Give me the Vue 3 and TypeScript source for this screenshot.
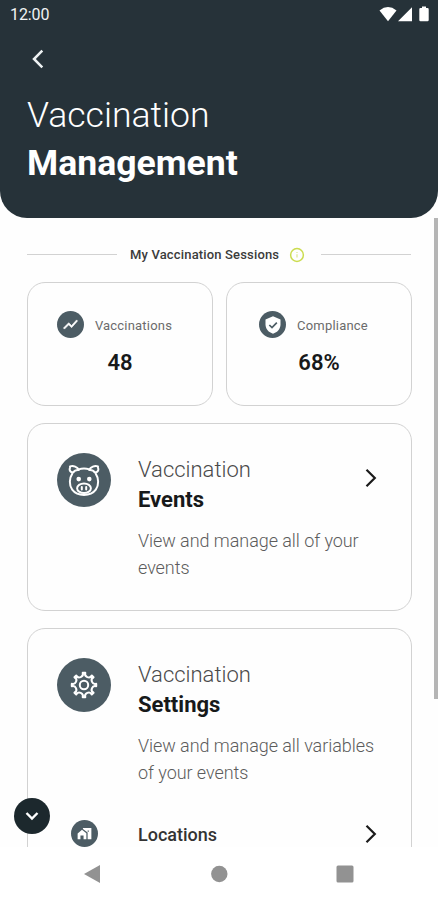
<script setup lang="ts">
interface Stat {
  id: 'trend' | 'shield'
  label: string
  value: string
}

const stats: Stat[] = [
  { id: 'trend', label: 'Vaccinations', value: '48' },
  { id: 'shield', label: 'Compliance', value: '68%' },
]

// Outline of an eight-toothed gear centred on the origin.
function gearOutline(radius: number, notch: number, halfTooth: number): string {
  const point = (deg: number): string => {
    const rad = (deg * Math.PI) / 180
    return `${(radius * Math.cos(rad)).toFixed(2)} ${(radius * Math.sin(rad)).toFixed(2)}`
  }
  let d = `M${point(-halfTooth)}`
  for (let k = 0; k < 8; k++) {
    const angle = k * 45
    d += `L${point(angle + halfTooth)}A${notch} ${notch} 0 0 0 ${point(angle + 45 - halfTooth)}`
  }
  return d + 'Z'
}

const gearPath = gearOutline(12.3, 3.5, 6)
</script>

<template>
  <div class="screen">
    <header class="header">
      <div class="status">
        <span class="time">12:00</span>
        <svg class="signals" width="52" height="18" viewBox="0 0 52 18">
          <path d="M0.5 4.4Q9 -2.4 17.5 4.4L9 15.2Z" />
          <path d="M19 15.2L33 1.2V15.2Z" />
          <path d="M40.3 3.2a1.2 1.2 0 0 1 1.2-1.2H43V.6h4V2h1.500a1.200 1.200 0 0 1 1.200 1.200V14a1.200 1.200 0 0 1-1.200 1.200h-7a1.200 1.200 0 0 1-1.200-1.200Z" />
        </svg>
      </div>
      <button class="back" aria-label="Back">
        <svg width="12" height="20" viewBox="0 0 12 20">
          <path d="M10.300 1.700L2 10l8.300 8.300" />
        </svg>
      </button>
      <h1 class="heading"><span class="thin">Vaccination</span><span class="strong">Management</span></h1>
    </header>

    <main class="content">
      <div class="divider">
        <span class="rule"></span>
        <span class="divider-text">My Vaccination Sessions</span>
        <svg class="info" width="16" height="16" viewBox="0 0 16 16">
          <circle cx="8" cy="8" r="6.400" />
          <path class="info-mark" d="M8 7.200v3.200M8 5v1" />
        </svg>
        <span class="rule"></span>
      </div>

      <div class="stats">
        <section v-for="stat in stats" :key="stat.id" class="stat">
          <div class="stat-row">
            <span class="badge small">
              <svg v-if="stat.id === 'trend'" width="17" height="17" viewBox="0 0 24 24">
                <path d="M3.500 18.490l6-6.010 4 4L22 6.920l-1.410-1.410-7.090 7.970-4-4L2 16.990z" class="fill bold" />
              </svg>
              <svg v-else width="20" height="20" viewBox="0 0 24 24">
                <path class="fill" d="M12 1.500L3 5.300v5.900c0 5.500 3.800 9.900 9 11.300 5.200-1.400 9-5.800 9-11.300V5.300z" />
                <path class="check" d="M7.600 12l3.200 3.200 5.800-6" />
              </svg>
            </span>
            <span class="stat-label">{{ stat.label }}</span>
          </div>
          <div class="stat-value">{{ stat.value }}</div>
        </section>
      </div>

      <section class="card events">
        <span class="badge large">
          <svg class="line-icon" width="34" height="34" viewBox="-17 -17 34 34">
            <path d="M-5.500 -10.600C-2 -11.900 2 -11.900 5.500 -10.600M-11.800 -6.200C-14.800 -2 -15 5.500 -11.800 9.700C-6.500 16.800 6.500 16.800 11.800 9.700C15 5.500 14.800 -2 11.800 -6.200" />
            <path d="M-5.200 -10C-6.600 -13.200 -10.500 -14.600 -14 -13.600C-13.300 -12.600 -14.700 -11.800 -14.300 -10.100C-13.900 -8.300 -12.500 -7.600 -11 -7.400C-9.500 -9.600 -7.800 -10.300 -5.200 -10ZM5.200 -10C6.600 -13.200 10.500 -14.600 14 -13.600C13.300 -12.600 14.700 -11.800 14.300 -10.100C13.900 -8.300 12.500 -7.600 11 -7.400C9.500 -9.600 7.800 -10.300 5.200 -10Z" />
            <ellipse cx="0" cy="8.200" rx="6.900" ry="4.800" />
            <path d="M-2.200 6.900v2.600M2.200 6.900v2.600" />
            <circle class="eye" cx="-5.300" cy="-0.900" r="2.300" />
            <circle class="eye" cx="5.300" cy="-0.900" r="2.300" />
          </svg>
        </span>
        <div class="card-text">
          <h2 class="card-title"><span class="thin">Vaccination</span><span class="strong">Events</span></h2>
          <p class="description">View and manage all of your events</p>
        </div>
        <svg class="chevron" width="12" height="20" viewBox="0 0 12 20">
          <path d="M1.500 1.700L9.800 10l-8.300 8.300" />
        </svg>
      </section>

      <section class="card settings">
        <span class="badge large">
          <svg class="line-icon" width="34" height="34" viewBox="-17 -17 34 34">
            <path :d="gearPath" />
            <circle r="4.200" />
          </svg>
        </span>
        <div class="card-text">
          <h2 class="card-title"><span class="thin">Vaccination</span><span class="strong">Settings</span></h2>
          <p class="description">View and manage all variables of your events</p>
        </div>
        <div class="link-row">
          <span class="link-icon">
            <span class="badge small">
              <svg width="15" height="15" viewBox="0 0 24 24">
                <path class="fill" d="M1 12v9h4.500v-6h5v6H15V11.500L8 6zM9.500 3v1.800l7.500 5.500V21h6V3zm9.500 6h-2V7h2z" />
              </svg>
            </span>
          </span>
          <span class="link-label">Locations</span>
          <svg class="chevron" width="12" height="20" viewBox="0 0 12 20">
            <path d="M1.500 1.700L9.800 10l-8.300 8.300" />
          </svg>
        </div>
      </section>

      <div class="scrollbar"></div>
      <button class="fab" aria-label="Scroll down">
        <svg width="14" height="10" viewBox="0 0 14 10">
          <path d="M1.500 2L7 7.500 12.500 2" />
        </svg>
      </button>
    </main>

    <nav class="navbar">
      <svg width="18" height="20" viewBox="0 0 18 20"><path d="M0 10L16 1v18z" /></svg>
      <svg width="18" height="20" viewBox="0 0 18 20"><circle cx="9.300" cy="10" r="8.200" /></svg>
      <svg width="18" height="20" viewBox="0 0 18 20"><rect x=".5" y="1.500" width="17" height="17" rx="1.500" /></svg>
    </nav>
  </div>
</template>

<style>
body {
  background: #fff;
}
</style>

<style scoped>
.screen {
  display: flex;
  flex-direction: column;
  width: 438px;
  height: 900px;
  overflow: hidden;
  background: #fefefe;
  color: #17191a;
  font-family: Roboto, 'Liberation Sans', sans-serif;
}

.header {
  flex: none;
  height: 218px;
  box-sizing: border-box;
  border-radius: 0 0 27px 27px;
  background: #263239;
  color: #fff;
}

.status {
  display: flex;
  justify-content: space-between;
  height: 29px;
  padding: 0 7px 0 10px;
}

.time {
  font-size: 16px;
  line-height: 30px;
  letter-spacing: -0.1px;
  color: #f1f3f4;
}

.signals {
  margin-top: 6px;
  fill: #fff;
}

.back {
  display: flex;
  margin: 20px 0 0 32px;
  padding: 0;
  border: 0;
  background: none;
}

.back path {
  fill: none;
  stroke: #eef2f3;
  stroke-width: 2.5;
}

.heading {
  display: flex;
  flex-direction: column;
  margin: 22px 0 0 27px;
  font-size: 35.6px;
  line-height: 48px;
}

.thin {
  font-weight: 300;
}

.strong {
  font-weight: 700;
}

.content {
  position: relative;
  flex: 1;
  min-height: 0;
  overflow: hidden;
  padding: 27px 27px 0;
}

.divider {
  display: flex;
  align-items: center;
  height: 19px;
}

.rule {
  width: 90px;
  height: 1px;
  background: #d2d2d2;
}

.divider-text {
  margin-left: 13px;
  font-size: 13px;
  font-weight: 500;
  letter-spacing: 0.16px;
  white-space: nowrap;
  color: #3b3b3b;
}

.info {
  margin: 0 16px 0 auto;
  fill: none;
  stroke: #cbdc4f;
  stroke-width: 1.5;
}

.info-mark {
  stroke-width: 1.1;
  opacity: 0.7;
}

.stats {
  display: grid;
  grid-template-columns: 186px 186px;
  gap: 13px;
  margin-top: 18px;
}

.stat {
  height: 124px;
  box-sizing: border-box;
  border: 1.5px solid #d2d2d2;
  border-radius: 18px;
  padding-top: 28px;
}

.stat-row {
  display: flex;
  align-items: center;
  justify-content: center;
  gap: 11px;
  padding-right: 11px;
}

.badge {
  display: flex;
  flex: none;
  align-items: center;
  justify-content: center;
  border-radius: 50%;
  background: #4c5c64;
}

.small {
  width: 27px;
  height: 27px;
}

.large {
  width: 54px;
  height: 54px;
}

.fill {
  fill: #fff;
}

.bold {
  stroke: #fff;
  stroke-width: 0.8;
}

.check {
  fill: none;
  stroke: #4c5c64;
  stroke-width: 2;
}

.stat-label {
  padding-top: 2px;
  font-size: 13px;
  letter-spacing: 0.2px;
  color: #6b6b6b;
}

.stat-value {
  margin-top: 10px;
  text-align: center;
  font-size: 22px;
  font-weight: 600;
  line-height: 30px;
}

.card {
  display: grid;
  grid-template-columns: 54px 1fr auto;
  column-gap: 27px;
  box-sizing: border-box;
  width: 385px;
  margin-top: 17px;
  border: 1.5px solid #d2d2d2;
  border-radius: 18px;
  padding: 29px 34px 0 29px;
  align-items: start;
  align-content: start;
}

.events {
  height: 188px;
}

.settings {
  height: 300px;
}

.card-text {
  grid-column: 2 / 4;
  grid-row: 1;
  padding-top: 2px;
}

.card-title {
  display: flex;
  flex-direction: column;
  margin: 0;
  font-size: 22px;
  line-height: 30px;
}

.card-title .thin {
  color: #4a4a4a;
}

.description {
  margin: 12px 0 0;
  font-size: 18px;
  font-weight: 300;
  line-height: 27px;
  letter-spacing: -0.06px;
  color: #5c5c5c;
}

.events .chevron {
  grid-column: 3;
  grid-row: 1;
  margin-top: 15px;
}

.chevron path {
  fill: none;
  stroke: #1b1b1b;
  stroke-width: 2.2;
}

.line-icon {
  fill: none;
  stroke: #fff;
  stroke-width: 2;
  stroke-linecap: round;
  stroke-linejoin: round;
}

.eye {
  fill: #fff;
  stroke: none;
}

.link-row {
  display: flex;
  grid-column: 1 / 4;
  align-items: center;
  margin-top: 34px;
}

.link-icon {
  display: flex;
  justify-content: center;
  width: 54px;
}

.link-label {
  flex: 1;
  margin-left: 27px;
  padding-top: 2px;
  font-size: 18px;
  font-weight: 500;
  color: #333;
}

.scrollbar {
  position: absolute;
  top: 0;
  right: 0;
  width: 4px;
  height: 481px;
  background: #b5b5b5;
}

.fab {
  position: absolute;
  left: 14px;
  bottom: 13px;
  display: flex;
  align-items: center;
  justify-content: center;
  width: 36px;
  height: 36px;
  border: 0;
  border-radius: 50%;
  padding: 0;
  background: #1c282d;
}

.fab path {
  fill: none;
  stroke: #fff;
  stroke-width: 2.4;
}

.navbar {
  display: flex;
  flex: none;
  justify-content: space-between;
  height: 53px;
  box-sizing: border-box;
  padding: 17px 84px 0;
  background: #fff;
  fill: #929292;
}
</style>
